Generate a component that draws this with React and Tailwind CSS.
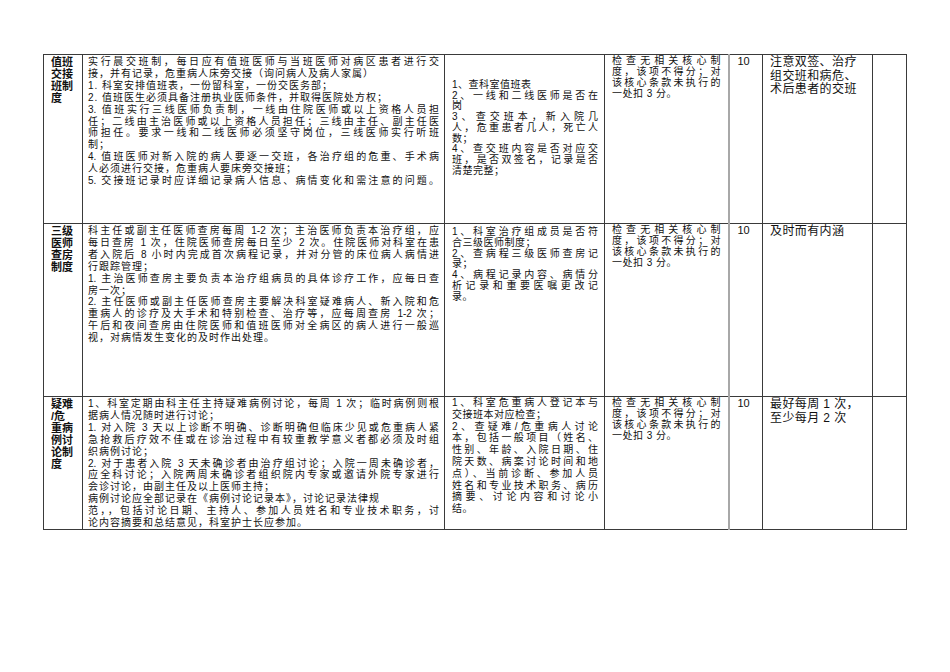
import React from "react";

// [text, justified] — justified lines fill the whole cell width like the Word original
const rows = [
  {
    height: "h-[169px]",
    title: ["值班", "交接", "班制", "度"],
    rules: [
      ["实行晨交班制，每日应有值班医师与当班医师对病区患者进行交", true],
      ["接，并有记录，危重病人床旁交接（询问病人及病人家属）", false],
      ["1. 科室安排值班表，一份留科室，一份交医务部；", false],
      ["2. 值班医生必须具备注册执业医师条件，并取得医院处方权；", false],
      ["3. 值班实行三线医师负责制，一线由住院医师或以上资格人员担", true],
      ["任；二线由主治医师或以上资格人员担任；三线由主任、副主任医", true],
      ["师担任。要求一线和二线医师必须坚守岗位，三线医师实行听班", true],
      ["制；", false],
      ["4. 值班医师对新入院的病人要逐一交班，各治疗组的危重、手术病", true],
      ["人必须进行交接，危重病人要床旁交接班；", false],
      ["5. 交接班记录时应详细记录病人信息、病情变化和需注意的问题。", true],
    ],
    checkPad: "pt-[25px]",
    checkLead: "leading-[10.7px]",
    check: [
      ["1、查科室值班表", false],
      ["2、一线和二线医师是否在", true],
      ["岗", false],
      ["3、查交班本，新入院几", true],
      ["人，危重患者几人，死亡人", true],
      ["数；", false],
      ["4、查交班内容是否对应交", true],
      ["班，是否双签名，记录是否", true],
      ["清楚完整；", false],
    ],
    note: ["注意双签、治疗", "组交班和病危、", "术后患者的交班"],
  },
  {
    height: "h-[173px]",
    title: ["三级", "医师", "查房", "制度"],
    rules: [
      ["科主任或副主任医师查房每周 1-2 次；主治医师负责本治疗组，应", true],
      ["每日查房 1 次，住院医师查房每日至少 2 次。住院医师对科室在患", true],
      ["者入院后 8 小时内完成首次病程记录，并对分管的床位病人病情进", true],
      ["行跟踪管理；", false],
      ["1. 主治医师查房主要负责本治疗组病员的具体诊疗工作，应每日查", true],
      ["房一次；", false],
      ["2. 主任医师或副主任医师查房主要解决科室疑难病人、新入院和危", true],
      ["重病人的诊疗及大手术和特别检查、治疗等，应每周查房 1-2 次；", true],
      ["午后和夜间查房由住院医师和值班医师对全病区的病人进行一般巡", true],
      ["视，对病情发生变化的及时作出处理。", false],
    ],
    checkPad: "pt-[3px]",
    checkLead: "leading-[10.8px]",
    check: [
      ["1、科室治疗组成员是否符", true],
      ["合三级医师制度；", false],
      ["2、查病程三级医师查房记", true],
      ["录；", false],
      ["4、病程记录内容、病情分", true],
      ["析记录和重要医嘱更改记", true],
      ["录。", false],
    ],
    note: ["及时而有内涵"],
  },
  {
    height: "h-[131px]",
    title: ["疑难", "/危", "重病", "例讨", "论制", "度"],
    rules: [
      ["1、科室定期由科主任主持疑难病例讨论，每周 1 次；临时病例则根", true],
      ["据病人情况随时进行讨论；", false],
      ["1. 对入院 3 天以上诊断不明确、诊断明确但临床少见或危重病人紧", true],
      ["急抢救后疗效不佳或在诊治过程中有较重教学意义者都必须及时组", true],
      ["织病例讨论；", false],
      ["2. 对于患者入院 3 天未确诊者由治疗组讨论；入院一周未确诊者，", true],
      ["应全科讨论；入院两周未确诊者组织院内专家或邀请外院专家进行", true],
      ["会诊讨论，由副主任及以上医师主持；", false],
      ["病例讨论应全部记录在《病例讨论记录本》，讨论记录法律规", false],
      ["范，，包括讨论日期、主持人、参加人员姓名和专业技术职务，讨", true],
      ["论内容摘要和总结意见，科室护士长应参加。", false],
    ],
    checkPad: "pt-[0px]",
    checkLead: "leading-[11.8px]",
    check: [
      ["1、科室危重病人登记本与", true],
      ["交接班本对应检查；", false],
      ["2、查疑难/危重病人讨论", true],
      ["本，包括一般项目（姓名、", true],
      ["性别、年龄、入院日期、住", true],
      ["院天数、病案讨论时间和地", true],
      ["点）、当前诊断、参加人员", true],
      ["姓名和专业技术职务、病历", true],
      ["摘要、讨论内容和讨论小", true],
      ["结。", false],
    ],
    note: ["最好每周 1 次，", "至少每月 2 次"],
  },
];

const penalty = [
  ["检查无相关核心制", true],
  ["度，该项不得分；对", true],
  ["该核心条款未执行的", true],
  ["一处扣 3 分。", false],
];

const Lines = ({ lines, loose }) => (
  <>
    {lines.map(([t, full], i) => (
      <div
        key={i}
        className={
          full
            ? "text-justify [text-align-last:justify]"
            : loose
            ? "tracking-[1px]"
            : "tracking-[0.5px]"
        }
      >
        {t}
      </div>
    ))}
  </>
);

const cell = "border border-[#3a3a3a] align-top p-0";

export default function App() {
  return (
    <div className="min-h-[672px] w-[950px] bg-white pt-[54px] pl-[43px] text-[#111] font-['Liberation_Sans','Noto_Sans_CJK_SC',sans-serif]">
      <table className="table-fixed border-collapse w-[863px]">
        <colgroup>
          <col className="w-[39px]" />
          <col className="w-[362px]" />
          <col className="w-[160px]" />
          <col className="w-[124px]" />
          <col className="w-[34px]" />
          <col className="w-[110px]" />
          <col className="w-[34px]" />
        </colgroup>
        <tbody>
          {rows.map((r, i) => (
            <tr key={i} className={r.height}>
              <td className={cell}>
                <div className="pl-[7px] pt-[1px] text-[11px] leading-[12px] font-bold">
                  {r.title.map((t, k) => (
                    <div key={k}>{t}</div>
                  ))}
                </div>
              </td>
              <td className={cell}>
                <div className="px-[5px] pt-[1px] text-[10px] leading-[11.9px]">
                  <Lines lines={r.rules} loose />
                </div>
              </td>
              <td className={cell}>
                <div
                  className={`pl-[7px] pr-[6px] text-[10px] ${r.checkPad} ${r.checkLead}`}
                >
                  <Lines lines={r.check} />
                </div>
              </td>
              <td className={`${cell} border-r-2 border-r-[#a8a8a8]`}>
                <div className="pl-[7px] pr-[7px] pt-[0px] text-[10px] leading-[11px]">
                  <Lines lines={penalty} />
                </div>
              </td>
              <td className={`${cell} border-l-2 border-l-[#a8a8a8]`}>
                <div className="pl-[8px] pt-[0px] text-[11px] leading-[12px]">
                  10
                </div>
              </td>
              <td className={cell}>
                <div className="pl-[7px] pt-[1px] text-[12px] leading-[13.5px] tracking-[0.4px]">
                  {r.note.map((t, k) => (
                    <div key={k}>{t}</div>
                  ))}
                </div>
              </td>
              <td className={cell}></td>
            </tr>
          ))}
        </tbody>
      </table>
    </div>
  );
}
